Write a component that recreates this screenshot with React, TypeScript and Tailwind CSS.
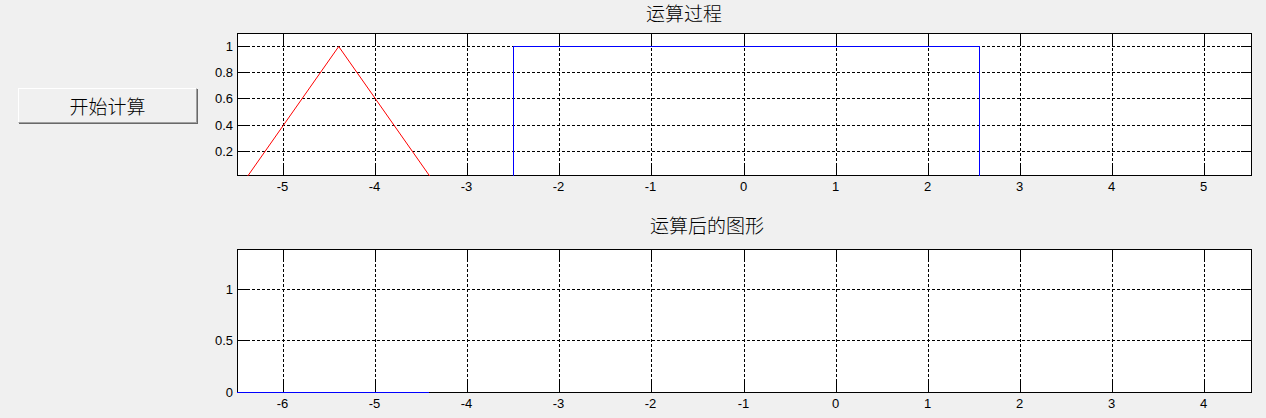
import React from "react";

type Tick = { p: number; label: string };

const COLS = [283, 375, 467, 559, 651, 744, 836, 928, 1020, 1112, 1204];

const BOX_L = 237;
const BOX_R = 1251;

function Axes({
  top,
  bottom,
  vbY,
  vbH,
  xLabels,
  yTicks,
  id,
  children,
}: {
  top: number;
  bottom: number;
  vbY: number;
  vbH: number;
  xLabels: string[];
  yTicks: Tick[];
  id: string;
  children?: React.ReactNode;
}) {
  const tick = 10;
  const xTicks: Tick[] = COLS.map((p, i) => ({ p, label: xLabels[i] }));
  return (
    <svg
      width={1066}
      height={vbH}
      viewBox={`200 ${vbY} 1066 ${vbH}`}
      className="block"
      shapeRendering="crispEdges"
    >
      <defs>
        <clipPath id={id}>
          <rect x={BOX_L} y={top} width={BOX_R - BOX_L + 1} height={bottom - top + 1} />
        </clipPath>
      </defs>
      <rect x={BOX_L + 0.5} y={top + 0.5} width={BOX_R - BOX_L} height={bottom - top} fill="#ffffff" />

      {/* grid */}
      <g stroke="#000" strokeWidth={1} strokeDasharray="3 2">
        {xTicks.map((t) => (
          <line key={"gx" + t.p} x1={t.p + 0.5} x2={t.p + 0.5} y1={top + tick} y2={bottom - tick} />
        ))}
        {yTicks.map((t) => (
          <line key={"gy" + t.p} y1={t.p + 0.5} y2={t.p + 0.5} x1={BOX_L + tick} x2={BOX_R - tick} />
        ))}
      </g>

      {/* ticks */}
      <g stroke="#000" strokeWidth={1}>
        {xTicks.map((t) => (
          <g key={"tx" + t.p}>
            <line x1={t.p + 0.5} x2={t.p + 0.5} y1={top} y2={top + tick} />
            <line x1={t.p + 0.5} x2={t.p + 0.5} y1={bottom - tick} y2={bottom + 1} />
          </g>
        ))}
        {yTicks.map((t) => (
          <g key={"ty" + t.p}>
            <line y1={t.p + 0.5} y2={t.p + 0.5} x1={BOX_L} x2={BOX_L + tick} />
            <line y1={t.p + 0.5} y2={t.p + 0.5} x1={BOX_R - tick} x2={BOX_R + 1} />
          </g>
        ))}
        <rect x={BOX_L + 0.5} y={top + 0.5} width={BOX_R - BOX_L} height={bottom - top} fill="none" />
      </g>

      {/* data */}
      <g clipPath={`url(#${id})`} fill="none" strokeWidth={1}>
        {children}
      </g>

      {/* labels */}
      <g fontFamily='"Liberation Sans", Arial, sans-serif' fontSize={13} fill="#000">
        {xTicks.map((t) => (
          <text key={"lx" + t.p} x={t.p - 0.5} y={bottom + 16} textAnchor="middle">
            {t.label}
          </text>
        ))}
        {yTicks.map((t) => (
          <text key={"ly" + t.p} x={233} y={t.p + 5} textAnchor="end">
            {t.label}
          </text>
        ))}
      </g>
    </svg>
  );
}

export default function App() {
  // top plot: x in [-5.5, 5.5], rows: 1 -> 46.3, 131.25 px per unit
  const tx = (v: number) => 744.3 + 92.18 * v;
  const ty = (v: number) => 46.5 + (1 - v) * 131.25;

  return (
    <div className="w-[1266px] h-[418px] bg-[#f0f0f0] flex overflow-hidden">
      {/* control column */}
      <div className="w-[200px] flex-none">
        <button
          className="ml-[18px] mt-[88px] w-[179px] h-[35px] flex items-center justify-center bg-[#f0f0f0] border border-t-white border-l-white border-r-[#a0a0a0] border-b-[#a0a0a0] shadow-[1px_1px_0_#696969] text-[19px] font-light leading-none text-black"
          style={{ fontFamily: '"Noto Sans CJK SC", "Noto Sans", sans-serif' }}
        >
          开始计算
        </button>
      </div>

      {/* plots */}
      <div className="w-[1066px] flex-none flex flex-col">
        <div
          className="h-[28px] pl-[446px] text-[19px] font-light leading-[25px] text-black"
          style={{ fontFamily: '"Noto Sans CJK SC", sans-serif' }}
        >
          运算过程
        </div>
        <Axes
          id="c1"
          top={33}
          bottom={175}
          vbY={28}
          vbH={172}
          xLabels={["-5", "-4", "-3", "-2", "-1", "0", "1", "2", "3", "4", "5"]}
          yTicks={[
            { p: 46, label: "1" },
            { p: 72, label: "0.8" },
            { p: 98, label: "0.6" },
            { p: 125, label: "0.4" },
            { p: 151, label: "0.2" },
          ]}
        >
          <polyline
            stroke="#ff0000"
            shapeRendering="auto"
            points={`${tx(-5.4)},${ty(0)} ${tx(-4.4)},${ty(1)} ${tx(-3.4)},${ty(0)}`}
          />
          <polyline stroke="#0000ff" points="513.5,190 513.5,46.5 979.5,46.5 979.5,190" />
        </Axes>

        <div
          className="h-[44px] pt-[12px] pl-[450px] text-[19px] font-light leading-[25px] text-black"
          style={{ fontFamily: '"Noto Sans CJK SC", sans-serif' }}
        >
          运算后的图形
        </div>
        <Axes
          id="c2"
          top={249}
          bottom={392}
          vbY={244}
          vbH={174}
          xLabels={["-6", "-5", "-4", "-3", "-2", "-1", "0", "1", "2", "3", "4"]}
          yTicks={[
            { p: 289, label: "1" },
            { p: 340, label: "0.5" },
            { p: 392, label: "0" },
          ]}
        >
          <line stroke="#0000ff" x1={237} x2={429} y1={392.5} y2={392.5} />
        </Axes>
      </div>
    </div>
  );
}
